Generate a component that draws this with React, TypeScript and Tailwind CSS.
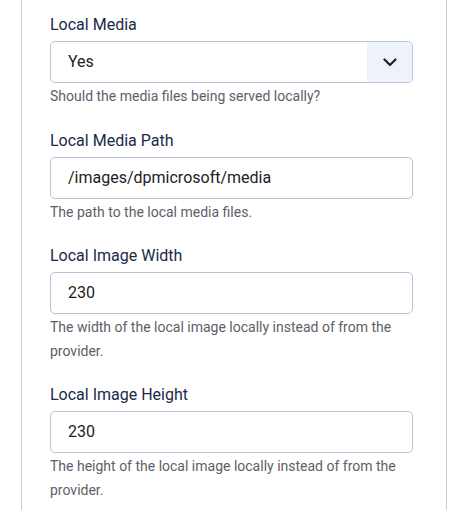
import React from "react";

type Field = {
  label: string;
  value: string;
  help: string;
  select?: boolean;
};

const fields: Field[] = [
  { label: "Local Media", value: "Yes", help: "Should the media files being served locally?", select: true },
  { label: "Local Media Path", value: "/images/dpmicrosoft/media", help: "The path to the local media files." },
  {
    label: "Local Image Width",
    value: "230",
    help: "The width of the local image locally instead of from the provider.",
  },
  {
    label: "Local Image Height",
    value: "230",
    help: "The height of the local image locally instead of from the provider.",
  },
];

const Chevron: React.FC = () => (
  <svg width="14" height="9" viewBox="0 0 14 9" fill="none">
    <path d="M1.5 1.5 L7 7 L12.5 1.5" stroke="#1d2126" strokeWidth="2.2" strokeLinecap="round" strokeLinejoin="round" />
  </svg>
);

const App: React.FC = () => {
  return (
    <div className="w-[460px] h-[510px] bg-white overflow-hidden font-['Roboto',sans-serif]">
      <div className="ml-[21px] w-[426px] h-full border-x border-[#c3cddd] pl-[28px] pr-[33px] pt-[13px] flex flex-col">
        {fields.map((f) => (
          <div key={f.label} className="flex flex-col mb-[20px]">
            <label className="text-[16px] leading-[24px] text-[#1a2a4b] mb-[4px]">{f.label}</label>
            <div className="h-[42px] w-full flex items-center border border-[#b7c3d6] rounded-[5px] bg-white overflow-hidden">
              <span className="flex-1 pl-[17px] text-[16px] text-[#1d2126]">{f.value}</span>
              {f.select && (
                <div className="w-[45px] h-full bg-[#eef3fb] flex items-center justify-center">
                  <Chevron />
                </div>
              )}
            </div>
            <p className="mt-[2px] text-[14px] leading-[23.5px] text-[#5c6168]">{f.help}</p>
          </div>
        ))}
      </div>
    </div>
  );
};

export default App;
